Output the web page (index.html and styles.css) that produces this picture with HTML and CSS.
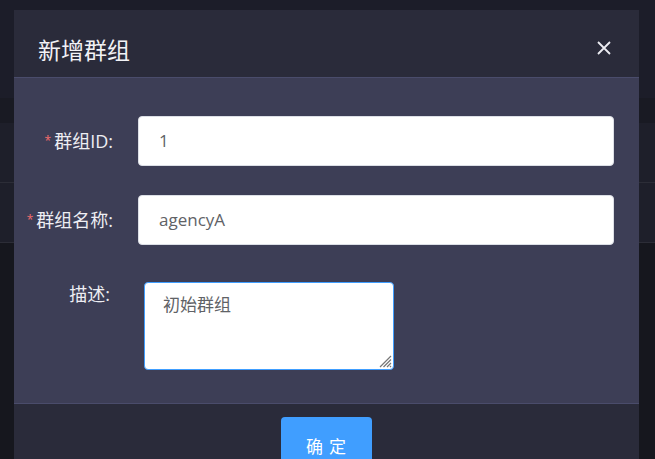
FILE: index.html
```html
<!DOCTYPE html>
<html lang="zh-CN">
<head>
<meta charset="utf-8">
<title>新增群组</title>
<link rel="stylesheet" href="styles.css">
</head>
<body>
<div class="page">
  <div class="band band-top"></div>
  <div class="band band-head"></div>
  <div class="band band-row"></div>
  <div class="band band-row"></div>
  <div class="band band-rest"></div>
</div>

<div class="dialog">
  <div class="dialog-header">
    <span class="dialog-title">新增群组</span>
    <span class="dialog-close">
      <svg width="14" height="14" viewBox="0 0 14 14"><path d="M1 1L13 13M13 1L1 13" stroke="#ececf2" stroke-width="1.8" fill="none"/></svg>
    </span>
  </div>
  <div class="dialog-body">
    <div class="form-item">
      <label class="form-label"><span class="req">*</span>群组ID:</label>
      <div class="input">1</div>
    </div>
    <div class="form-item">
      <label class="form-label"><span class="req">*</span>群组名称:</label>
      <div class="input">agencyA</div>
    </div>
    <div class="form-item form-item-area">
      <label class="form-label form-label-area">描述:</label>
      <div class="textarea">初始群组
        <svg class="grip" width="13" height="13" viewBox="0 0 13 13"><path d="M12 1L1 12M12 4.5L4.5 12M12 8L8 12M12 11L11 12" stroke="#777" stroke-width="1.2" fill="none"/></svg>
      </div>
    </div>
  </div>
  <div class="dialog-footer">
    <button class="btn-primary">确 定</button>
  </div>
</div>
</body>
</html>
```
FILE: styles.css
```css
html, body {
  margin: 0;
  padding: 0;
}
body {
  width: 655px;
  height: 459px;
  overflow: hidden;
  position: relative;
  background: #15161d;
  font-family: "Open Sans", "Noto Sans CJK SC", sans-serif;
}
.page {
  display: flex;
  flex-direction: column;
  height: 459px;
}
.band-top {
  height: 98px;
  background: #1c1d29;
}
.band-head {
  height: 25px;
  background: #191a23;
}
.band-row {
  height: 59px;
  background: #1e1f2a;
  border-bottom: 1px solid #2c2d37;
}
.band-rest {
  flex: 1;
  background: #16171e;
}

.dialog {
  position: absolute;
  left: 14px;
  top: 10px;
  width: 625px;
  height: 449px;
  overflow: hidden;
  display: flex;
  flex-direction: column;
  background: #2a2b3a;
}
.dialog-header {
  position: relative;
  flex: none;
  height: 68px;
  box-sizing: border-box;
  padding: 24px 24px 0 24px;
  background: #2a2b3a;
  border-bottom: 1px solid #4a4c6b;
}
.dialog-title {
  display: block;
  font-size: 23px;
  line-height: 30px;
  color: #f2f2f6;
  font-family: "Noto Sans CJK SC", sans-serif;
}
.dialog-close {
  position: absolute;
  right: 28px;
  top: 31px;
  width: 14px;
  height: 14px;
  display: block;
}
.dialog-close svg {
  display: block;
}

.dialog-body {
  flex: none;
  background: #3d3e56;
  padding: 38px 25px 33px 0;
  display: flex;
  flex-direction: column;
  gap: 29px;
  border-bottom: 1px solid #4a4c6b;
}
.form-item {
  display: flex;
  align-items: center;
}
.form-item-area {
  align-items: flex-start;
  margin-top: 8px;
}
.form-label {
  width: 99px;
  flex: none;
  margin-right: 25px;
  text-align: right;
  font-size: 18px;
  line-height: 24px;
  color: #eeeef3;
}
.form-label-area {
  width: 96px;
  margin-right: 34px;
}
.req {
  color: #f56c6c;
  font-size: 12px;
  margin-right: 3px;
  vertical-align: 3px;
}
.input {
  flex: 1;
  height: 50px;
  box-sizing: border-box;
  border: 1px solid #dcdfe6;
  border-radius: 4px;
  background: #ffffff;
  padding-left: 20px;
  font-size: 17px;
  line-height: 48px;
  color: #606266;
}
.textarea {
  position: relative;
  width: 250px;
  height: 88px;
  box-sizing: border-box;
  border: 1.5px solid #409eff;
  border-radius: 4px;
  background: #ffffff;
  padding: 9px 18px;
  font-size: 17px;
  line-height: 24px;
  color: #606266;
  font-family: "Noto Sans CJK SC", sans-serif;
}
.grip {
  position: absolute;
  right: 1px;
  bottom: 1px;
}

.dialog-footer {
  flex: 1;
  min-height: 0;
  overflow: hidden;
  background: #2a2b3a;
  display: flex;
  justify-content: center;
  align-items: flex-start;
  padding-top: 13px;
}
.btn-primary {
  flex: none;
  width: 91px;
  height: 56px;
  border: none;
  border-radius: 4px;
  background: #409eff;
  color: #ffffff;
  font-family: "Noto Sans CJK SC", sans-serif;
  font-size: 17px;
  letter-spacing: 1px;
  padding: 0;
}
```
